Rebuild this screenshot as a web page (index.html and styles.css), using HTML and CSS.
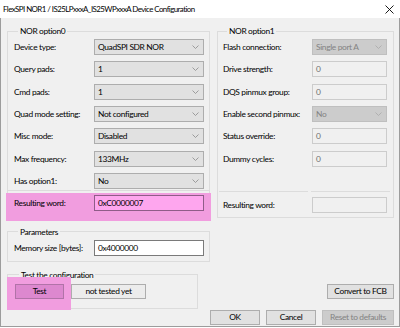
FILE: index.html
```html
<!DOCTYPE html>
<html lang="en">
<head>
    <meta charset="UTF-8">
    <title>Device Configuration</title>
    <link rel="stylesheet" href="styles.css">
</head>
<body>
<div class="window">
    <div class="titlebar">
        <span class="title">FlexSPI NOR1 / IS25LPxxxA_IS25WPxxxA Device Configuration</span>
        <svg class="close" width="9" height="9" viewBox="0 0 9 9"><path d="M0.5 0.5 L8.5 8.5 M8.5 0.5 L0.5 8.5" stroke="#000" stroke-width="0.9" fill="none"/></svg>
    </div>

    <div class="content">
        <!-- NOR options -->
        <div class="upper">
            <fieldset class="group opt0">
                <legend>NOR option0</legend>
                <div class="rows">
                    <div class="row"><label>Device type:</label><div class="combo"><span>QuadSPI SDR NOR</span><svg class="arrow" width="7" height="4" viewBox="0 0 7 4"><path d="M0.5 0.5 L3.5 3.5 L6.5 0.5" /></svg></div></div>
                    <div class="row"><label>Query pads:</label><div class="combo"><span>1</span><svg class="arrow" width="7" height="4" viewBox="0 0 7 4"><path d="M0.5 0.5 L3.5 3.5 L6.5 0.5" /></svg></div></div>
                    <div class="row"><label>Cmd pads:</label><div class="combo"><span>1</span><svg class="arrow" width="7" height="4" viewBox="0 0 7 4"><path d="M0.5 0.5 L3.5 3.5 L6.5 0.5" /></svg></div></div>
                    <div class="row"><label>Quad mode setting:</label><div class="combo"><span>Not configured</span><svg class="arrow" width="7" height="4" viewBox="0 0 7 4"><path d="M0.5 0.5 L3.5 3.5 L6.5 0.5" /></svg></div></div>
                    <div class="row"><label>Misc mode:</label><div class="combo"><span>Disabled</span><svg class="arrow" width="7" height="4" viewBox="0 0 7 4"><path d="M0.5 0.5 L3.5 3.5 L6.5 0.5" /></svg></div></div>
                    <div class="row"><label>Max frequency:</label><div class="combo"><span>133MHz</span><svg class="arrow" width="7" height="4" viewBox="0 0 7 4"><path d="M0.5 0.5 L3.5 3.5 L6.5 0.5" /></svg></div></div>
                    <div class="row"><label>Has option1:</label><div class="combo"><span>No</span><svg class="arrow" width="7" height="4" viewBox="0 0 7 4"><path d="M0.5 0.5 L3.5 3.5 L6.5 0.5" /></svg></div></div>
                </div>
                <div class="split"><span></span><span></span></div>
                <div class="row result hl-result"><label>Resulting word:</label><div class="edit hl-edit">0xC0000007</div></div>
            </fieldset>

            <fieldset class="group opt1">
                <legend>NOR option1</legend>
                <div class="rows">
                    <div class="row"><label>Flash connection:</label><div class="combo off"><span>Single port A</span><svg class="arrow" width="7" height="4" viewBox="0 0 7 4"><path d="M0.5 0.5 L3.5 3.5 L6.5 0.5" /></svg></div></div>
                    <div class="row"><label>Drive strength:</label><div class="edit off">0</div></div>
                    <div class="row"><label>DQS pinmux group:</label><div class="edit off">0</div></div>
                    <div class="row"><label>Enable second pinmux:</label><div class="combo off"><span>No</span><svg class="arrow" width="7" height="4" viewBox="0 0 7 4"><path d="M0.5 0.5 L3.5 3.5 L6.5 0.5" /></svg></div></div>
                    <div class="row"><label>Status override:</label><div class="edit off">0</div></div>
                    <div class="row"><label>Dummy cycles:</label><div class="edit off">0</div></div>
                </div>
                <div class="split"><span></span><span></span></div>
                <div class="row result"><label>Resulting word:</label><div class="edit off"></div></div>
            </fieldset>
        </div>

        <div class="lower">
            <div class="lower-left">
                <fieldset class="group params">
                    <legend>Parameters</legend>
                    <div class="row"><label>Memory size [bytes]:</label><div class="edit">0x4000000</div></div>
                </fieldset>
                <fieldset class="group test">
                    <legend>Test the configuration</legend>
                    <div class="test-row">
                        <div class="hl-test"><button class="btn btn-test">Test</button></div>
                        <div class="status">not tested yet</div>
                    </div>
                </fieldset>
            </div>
            <div class="lower-right">
                <button class="btn btn-fcb">Convert to FCB</button>
            </div>
        </div>

        <div class="footer">
            <button class="btn btn-ok">OK</button>
            <button class="btn btn-cancel">Cancel</button>
            <button class="btn btn-reset" disabled>Reset to defaults</button>
        </div>
    </div>
</div>
</body>
</html>
```

FILE: styles.css
```css
body {
    margin: 0;
    background-color: #ffffff;
    font-family: Lato, 'Noto Sans', sans-serif;
    font-size: 8.4px;
    letter-spacing: -0.35px;
    color: #000000;
}

.window {
    width: 400px;
    height: 327px;
    box-sizing: border-box;
    border: 1px solid #9c9c9c;
    border-top: none;
    background-color: #f0f0f0;
    display: flex;
    flex-direction: column;
}

.titlebar {
    height: 18px;
    margin: 0 -1px;
    background-color: #ffffff;
    display: flex;
    align-items: center;
    justify-content: space-between;
    padding: 0 6px 0 3px;
    flex-shrink: 0;
}

.title {
    font-size: 7.9px;
    letter-spacing: -0.55px;
    line-height: 18px;
}

.content {
    padding: 7px 5px 2px 6px;
    display: flex;
    flex-direction: column;
}

/* group boxes */
.group {
    margin: 0;
    padding: 0;
    min-width: 0;
    border: 1px solid #dcdcdc;
    box-sizing: border-box;
}

.group legend {
    padding: 0 2px;
    margin-left: 4px;
    line-height: 12px;
}

.upper {
    display: flex;
    gap: 7px;
}

.opt0 {
    width: 203px;
    padding: 0 5px 0 6px;
}

.opt1 {
    width: 177px;
    padding: 0 6px 4px 5px;
}

.rows {
    display: flex;
    flex-direction: column;
    gap: 6.33px;
    margin-top: 2px;
}

.row {
    display: flex;
    align-items: center;
    height: 16px;
    white-space: nowrap;
}

.opt0 .row label,
.params .row label {
    width: 80px;
}

.opt1 .row label {
    width: 89px;
}

.combo, .edit {
    box-sizing: border-box;
    height: 16px;
    border: 1px solid #adadad;
    background-color: #e1e1e1;
    display: flex;
    align-items: center;
    padding: 0 4px 0 3px;
}

.opt0 .combo, .opt0 .edit, .params .edit {
    width: 110px;
}

.opt1 .combo, .opt1 .edit {
    width: 75px;
}

.combo {
    justify-content: space-between;
}

.arrow path {
    fill: none;
    stroke: #8a8a8a;
    stroke-width: 0.8;
}

.edit {
    background-color: #ffffff;
    border-color: #7a7a7a;
}

.combo.off {
    background-color: #cccccc;
    border-color: #bfbfbf;
    color: #838383;
}

.combo.off .arrow path {
    stroke: #a8a8a8;
}

.edit.off {
    background-color: #f0f0f0;
    border-color: #cccccc;
    color: #6d6d6d;
}

.split {
    display: flex;
    gap: 3px;
    margin-top: 1px;
}

.split span {
    height: 1px;
    background-color: #dcdcdc;
}

.opt0 .split {
    margin-left: -6px;
    margin-right: -5px;
}

.opt0 .split span:first-child {
    width: 83px;
}

.opt0 .split span:last-child {
    flex: 1;
}

.opt1 .split {
    margin-top: 24px;
    margin-left: -4px;
    margin-right: -3px;
}

.opt1 .split span:first-child {
    width: 89px;
}

.opt1 .split span:last-child {
    flex: 1;
}

.opt1 .result {
    margin-top: 5px;
}

/* highlighted parts */
.hl-result {
    height: auto;
    margin: 2px -7px -5px -8px;
    padding: 2px 7px 10px 8px;
    background-color: #f19ddf;
}

.hl-edit {
    background-color: #fea6ee;
    border-color: #8f5c88;
}

.lower {
    display: flex;
    gap: 7px;
}

.lower-left {
    width: 203px;
    display: flex;
    flex-direction: column;
}

.params {
    margin-top: 8px;
    padding: 2px 5px 5px 6px;
}

.test {
    width: 191px;
    margin-top: 7px;
    padding: 3px 0 0 7px;
}

.test-row {
    display: flex;
    align-items: flex-start;
}

.hl-test {
    margin: -7px 0 -2px -8px;
    padding: 7px 7px 11px 8px;
    background-color: #f19ddf;
}

.btn {
    box-sizing: border-box;
    height: 15px;
    padding: 0;
    border: 1px solid #adadad;
    background-color: #e1e1e1;
    font-family: Lato, 'Noto Sans', sans-serif;
    font-size: 8.4px;
    letter-spacing: -0.35px;
    color: #000000;
}

.btn-test {
    width: 49px;
    background-color: #dd88cf;
    border-color: #b173a8;
}

.status {
    box-sizing: border-box;
    width: 75px;
    height: 15px;
    border: 1px solid #adadad;
    background-color: #ececec;
    display: flex;
    align-items: center;
    justify-content: center;
}

.lower-right {
    flex: 1;
    display: flex;
    align-items: flex-end;
    justify-content: flex-end;
    padding-bottom: 10px;
}

.btn-fcb {
    width: 67px;
}

.footer {
    display: flex;
    justify-content: flex-end;
    gap: 6px;
    margin-top: 1px;
}

.btn-ok, .btn-cancel {
    width: 50px;
}

.btn-reset {
    width: 72px;
    background-color: #cccccc;
    border-color: #bfbfbf;
    color: #838383;
}
```
